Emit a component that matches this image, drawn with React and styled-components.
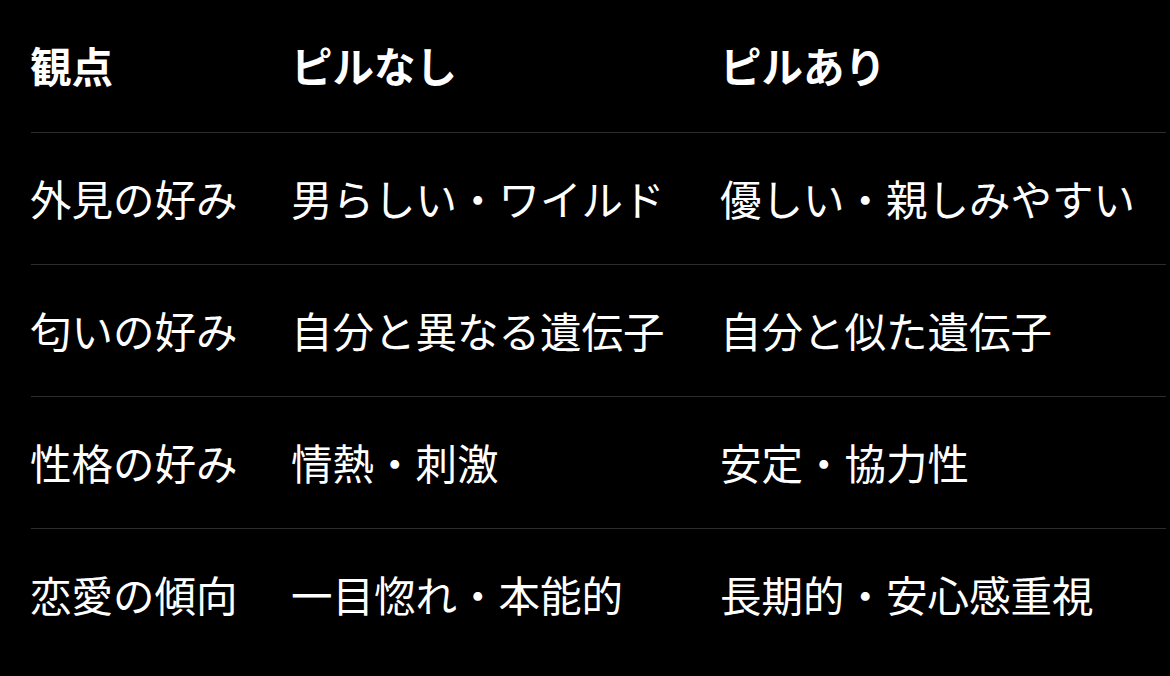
import React from 'react';
import styled, { createGlobalStyle } from 'styled-components';

const GlobalStyle = createGlobalStyle`
  html, body {
    margin: 0;
    padding: 0;
    background: #000;
  }
  body {
    font-family: "Noto Sans CJK JP", "Noto Sans", sans-serif;
    color: #fff;
  }
`;

const Page = styled.div`
  width: 1170px;
  height: 676px;
  background: #000;
  padding: 0 4px 0 31px;
  box-sizing: border-box;
  overflow: hidden;
`;

const Table = styled.div`
  display: flex;
  flex-direction: column;
`;

const Row = styled.div`
  display: grid;
  grid-template-columns: 261px 429px 1fr;
  align-items: center;
  height: 132px;
  box-sizing: border-box;
  border-top: ${props => (props.first ? 'none' : '1.5px solid #2c2c2c')};
`;

const Cell = styled.div`
  font-size: 41.5px;
  font-weight: ${props => (props.head ? 700 : 400)};
  line-height: 1;
  white-space: nowrap;
  margin-left: -1px;
`;

const HEADERS = ['観点', 'ピルなし', 'ピルあり'];

const ROWS = [
  ['外見の好み', '男らしい・ワイルド', '優しい・親しみやすい'],
  ['匂いの好み', '自分と異なる遺伝子', '自分と似た遺伝子'],
  ['性格の好み', '情熱・刺激', '安定・協力性'],
  ['恋愛の傾向', '一目惚れ・本能的', '長期的・安心感重視'],
];

const App = () => (
  <Page>
    <GlobalStyle />
    <Table>
      <Row first>
        {HEADERS.map(h => <Cell key={h} head>{h}</Cell>)}
      </Row>
      {
        ROWS.map(row => (
          <Row key={row[0]}>
            {row.map(text => <Cell key={text}>{text}</Cell>)}
          </Row>
        ))
      }
    </Table>
  </Page>
);

export default App;
